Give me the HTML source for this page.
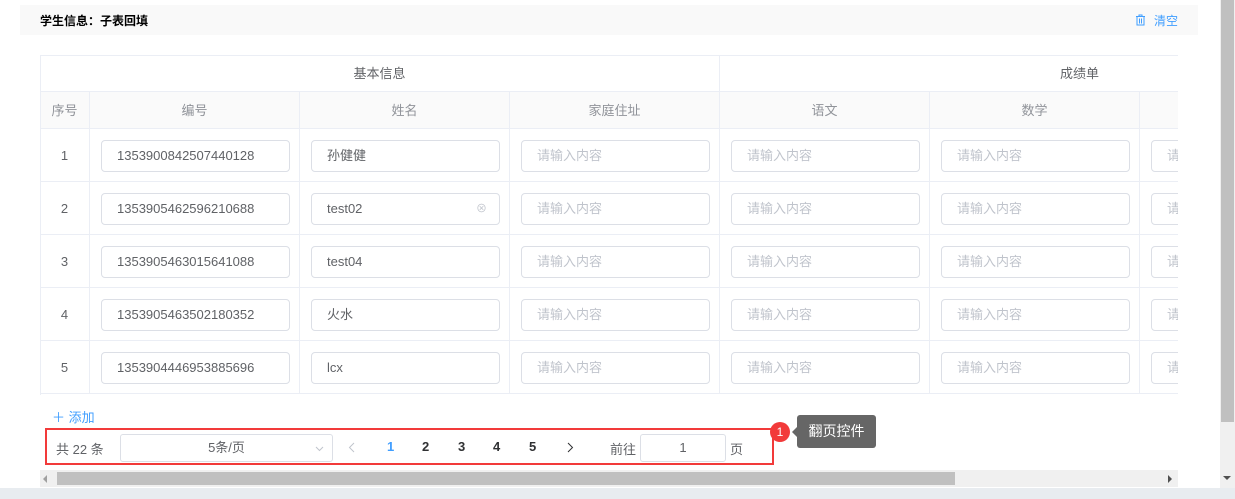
<!DOCTYPE html>
<html><head><meta charset="utf-8"><style>
*{box-sizing:border-box;margin:0;padding:0}
body{width:1235px;height:499px;overflow:hidden;background:#fff;font-family:"Liberation Sans","Noto Sans CJK SC",sans-serif;font-size:13px;color:#606266;position:relative}
.abs{position:absolute}
.hdr{left:20px;top:5px;width:1178px;height:30px;background:#f9f9f9}
.hdr b{position:absolute;left:20px;top:7px;font-size:12px;color:#000;font-weight:bold}
.clr{position:absolute;right:20px;top:7px;color:#409eff;font-size:12px}
.tbl{left:40px;top:55px;width:1138px;height:340px;overflow:hidden}
.cell{position:absolute;border-right:1px solid #ebeef5;border-bottom:1px solid #ebeef5;text-align:center}
.inp{position:absolute;height:32px;border:1px solid #dcdfe6;border-radius:4px;padding-left:15px;line-height:30px;text-align:left;color:#606266;font-size:13px;background:#fff}
.ph{color:#c0c4cc}
</style></head><body>
<div class="abs hdr"><b>学生信息：子表回填</b><span class="clr"><svg width="11" height="12" viewBox="0 0 11 12" style="vertical-align:-1px;margin-right:8px"><path d="M1 2.5h9M4 2.5V1h3v1.5M2 2.5v8.5h7V2.5M4.5 4.5v5M6.5 4.5v5" stroke="#409eff" fill="none"/></svg>清空</span></div>
<div class="abs tbl" id="t"></div>
<div class="abs" style="left:40px;top:55px;width:1138px;height:1px;background:#ebeef5"></div>
<div class="abs" style="left:40px;top:55px;width:1px;height:340px;background:#ebeef5"></div>
<div class="abs" style="left:52px;top:407px;color:#409eff;font-size:13px">＋ 添加</div>
<div class="abs" style="left:45px;top:428px;width:729px;height:37px;border:2px solid #f23a3a"></div>
<div class="abs" style="left:56px;top:439px">共 22 条</div>
<div class="abs" style="left:120px;top:434px;width:213px;height:28px;border:1px solid #dcdfe6;border-radius:3px;text-align:center;line-height:26px">5条/页<svg width="9" height="6" viewBox="0 0 9 6" style="position:absolute;right:8px;top:11px"><path d="M1 1l3.5 3.5L8 1" stroke="#c0c4cc" fill="none"/></svg></div>
<svg class="abs" style="left:348px;top:442px" width="7" height="11" viewBox="0 0 7 11"><path d="M6 1L1.5 5.5 6 10" stroke="#c0c4cc" fill="none"/></svg>
<div class="abs" style="left:387px;top:439px;color:#409eff;font-weight:bold">1</div>
<div class="abs" style="left:422px;top:439px;color:#303133;font-weight:bold">2</div>
<div class="abs" style="left:458px;top:439px;color:#303133;font-weight:bold">3</div>
<div class="abs" style="left:493px;top:439px;color:#303133;font-weight:bold">4</div>
<div class="abs" style="left:529px;top:439px;color:#303133;font-weight:bold">5</div>
<svg class="abs" style="left:567px;top:442px" width="7" height="11" viewBox="0 0 7 11"><path d="M1 1l4.5 4.5L1 10" stroke="#303133" fill="none"/></svg>
<div class="abs" style="left:610px;top:439px">前往</div>
<div class="abs" style="left:640px;top:434px;width:86px;height:28px;border:1px solid #dcdfe6;border-radius:3px;text-align:center;line-height:26px">1</div>
<div class="abs" style="left:730px;top:439px">页</div>
<div class="abs" style="left:770px;top:422px;width:20px;height:20px;border-radius:10px;background:#f23a3a;color:#fff;font-size:12px;text-align:center;line-height:20px">1</div>
<div class="abs" style="left:797px;top:415px;width:79px;height:33px;background:#666;border-radius:3px;color:#fff;font-size:14px;line-height:33px;text-align:center">翻页控件</div>
<div class="abs" style="left:792px;top:427px;width:0;height:0;border:5px solid transparent;border-right-color:#666;border-left:0"></div>
<div class="abs" style="left:40px;top:470px;width:1138px;height:17px;background:#f0f0f0"></div>
<div class="abs" style="left:57px;top:472px;width:898px;height:13px;background:#c0c0c0"></div>
<div class="abs" style="left:43px;top:475px;border:4px solid transparent;border-right:4px solid #a0a0a0;border-left:0"></div>
<div class="abs" style="left:1168px;top:475px;border:4px solid transparent;border-left:4px solid #505050;border-right:0"></div>
<div class="abs" style="left:1220px;top:0;width:15px;height:488px;background:#f0f0f0"></div>
<div class="abs" style="left:1221px;top:0;width:13px;height:422px;background:#c0c0c0"></div>
<div class="abs" style="left:1223px;top:476px;border:4px solid transparent;border-top:4px solid #505050;border-bottom:0"></div>
<div class="abs" style="left:0;top:488px;width:1235px;height:11px;background:#e8ecf0"></div>
<script>
var t=document.getElementById('t'),h='';
function c(x,y,w,hh,txt,bg,col){h+='<div class="cell" style="left:'+x+'px;top:'+y+'px;width:'+w+'px;height:'+hh+'px;line-height:'+hh+'px;'+(bg?'background:'+bg+';':'')+(col?'color:'+col+';':'')+'">'+txt+'</div>';}
c(0,0,680,37,'基本信息',null,'#606266');c(680,0,620,37,'<span style="position:relative;left:50px">成绩单</span>',null,'#606266');
var cols=[[0,50,'序号'],[50,210,'编号'],[260,210,'姓名'],[470,210,'家庭住址'],[680,210,'语文'],[890,210,'数学'],[1100,210,'']];
cols.forEach(function(k){c(k[0],37,k[1],37,k[2],'#fafafa','#909399');});
var ids=['1353900842507440128','1353905462596210688','1353905463015641088','1353905463502180352','1353904446953885696'];
var nm=['孙健健','test02','test04','火水','lcx'];
for(var r=0;r<5;r++){var y=74+r*53;
cols.forEach(function(k,i){c(k[0],y,k[1],53,i==0?(r+1):'',null,'#606266');});
for(var i=1;i<7;i++){var x=cols[i][0]+11;var v;
if(i==1)v=ids[r];else if(i==2)v=nm[r]+(r==1?'<span style="position:absolute;right:12px;color:#c0c4cc;font-size:11px">⊗</span>':'');else v='<span class="ph">请输入内容</span>';
h+='<div class="inp" style="left:'+x+'px;top:'+(y+11)+'px;width:189px">'+v+'</div>';}}
t.innerHTML=h;
</script>
</body></html>
